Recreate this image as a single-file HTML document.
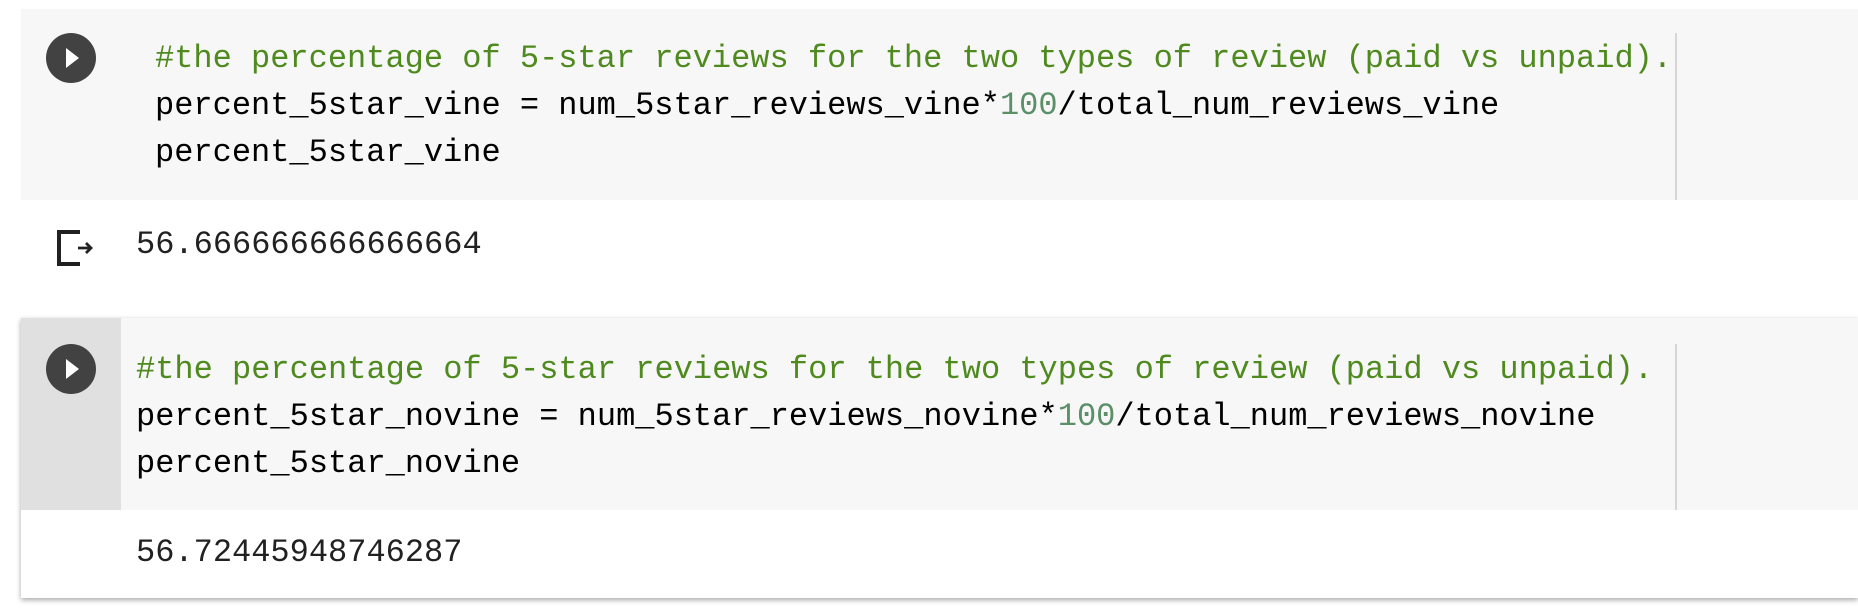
<!DOCTYPE html>
<html><head><style>
body{margin:0;width:1858px;height:609px;background:#fff;position:relative;overflow:hidden;font-family:"Liberation Mono",monospace}
.abs{position:absolute}
.code{font-size:32px;line-height:47px;white-space:pre;color:#000}
.c{color:#4f8a1e}.n{color:#5a8f68}
.out{font-size:32px;color:#212121;white-space:pre}
</style></head><body>
<div class="abs" style="left:21px;top:9px;width:1837px;height:191px;background:#f7f7f7"></div>
<div class="abs" style="left:1675px;top:33px;width:2px;height:167px;background:#d6d6d6"></div>
<svg class="abs" style="left:46px;top:33px" width="50" height="50"><circle cx="25" cy="25" r="25" fill="#424242"/><path d="M20 15 L33 25 L20 35Z" fill="#fff"/></svg>
<div class="abs code" style="left:155px;top:35px"><span class="c">#the percentage of 5-star reviews for the two types of review (paid vs unpaid).</span>
percent_5star_vine = num_5star_reviews_vine*<span class="n">100</span>/total_num_reviews_vine
percent_5star_vine</div>
<svg class="abs" style="left:56px;top:229px" width="40" height="38"><path d="M24 3 H3 V35 H24" fill="none" stroke="#212121" stroke-width="4"/><path d="M22 19 H35 M30 14 L35 19 L30 24" fill="none" stroke="#212121" stroke-width="2.8"/></svg>
<div class="abs out" style="left:136px;top:226px">56.666666666666664</div>

<div class="abs" style="left:21px;top:318px;width:1837px;height:280px;background:#fff;box-shadow:0 2px 5px rgba(0,0,0,.35)"></div>
<div class="abs" style="left:21px;top:318px;width:1837px;height:192px;background:#f7f7f7"></div>
<div class="abs" style="left:21px;top:318px;width:100px;height:192px;background:#e0e0e0"></div>
<div class="abs" style="left:1675px;top:344px;width:2px;height:166px;background:#d6d6d6"></div>
<svg class="abs" style="left:46px;top:344px" width="50" height="50"><circle cx="25" cy="25" r="25" fill="#424242"/><path d="M20 15 L33 25 L20 35Z" fill="#fff"/></svg>
<div class="abs code" style="left:136px;top:346px"><span class="c">#the percentage of 5-star reviews for the two types of review (paid vs unpaid).</span>
percent_5star_novine = num_5star_reviews_novine*<span class="n">100</span>/total_num_reviews_novine
percent_5star_novine</div>
<div class="abs out" style="left:136px;top:534px">56.72445948746287</div>
</body></html>
